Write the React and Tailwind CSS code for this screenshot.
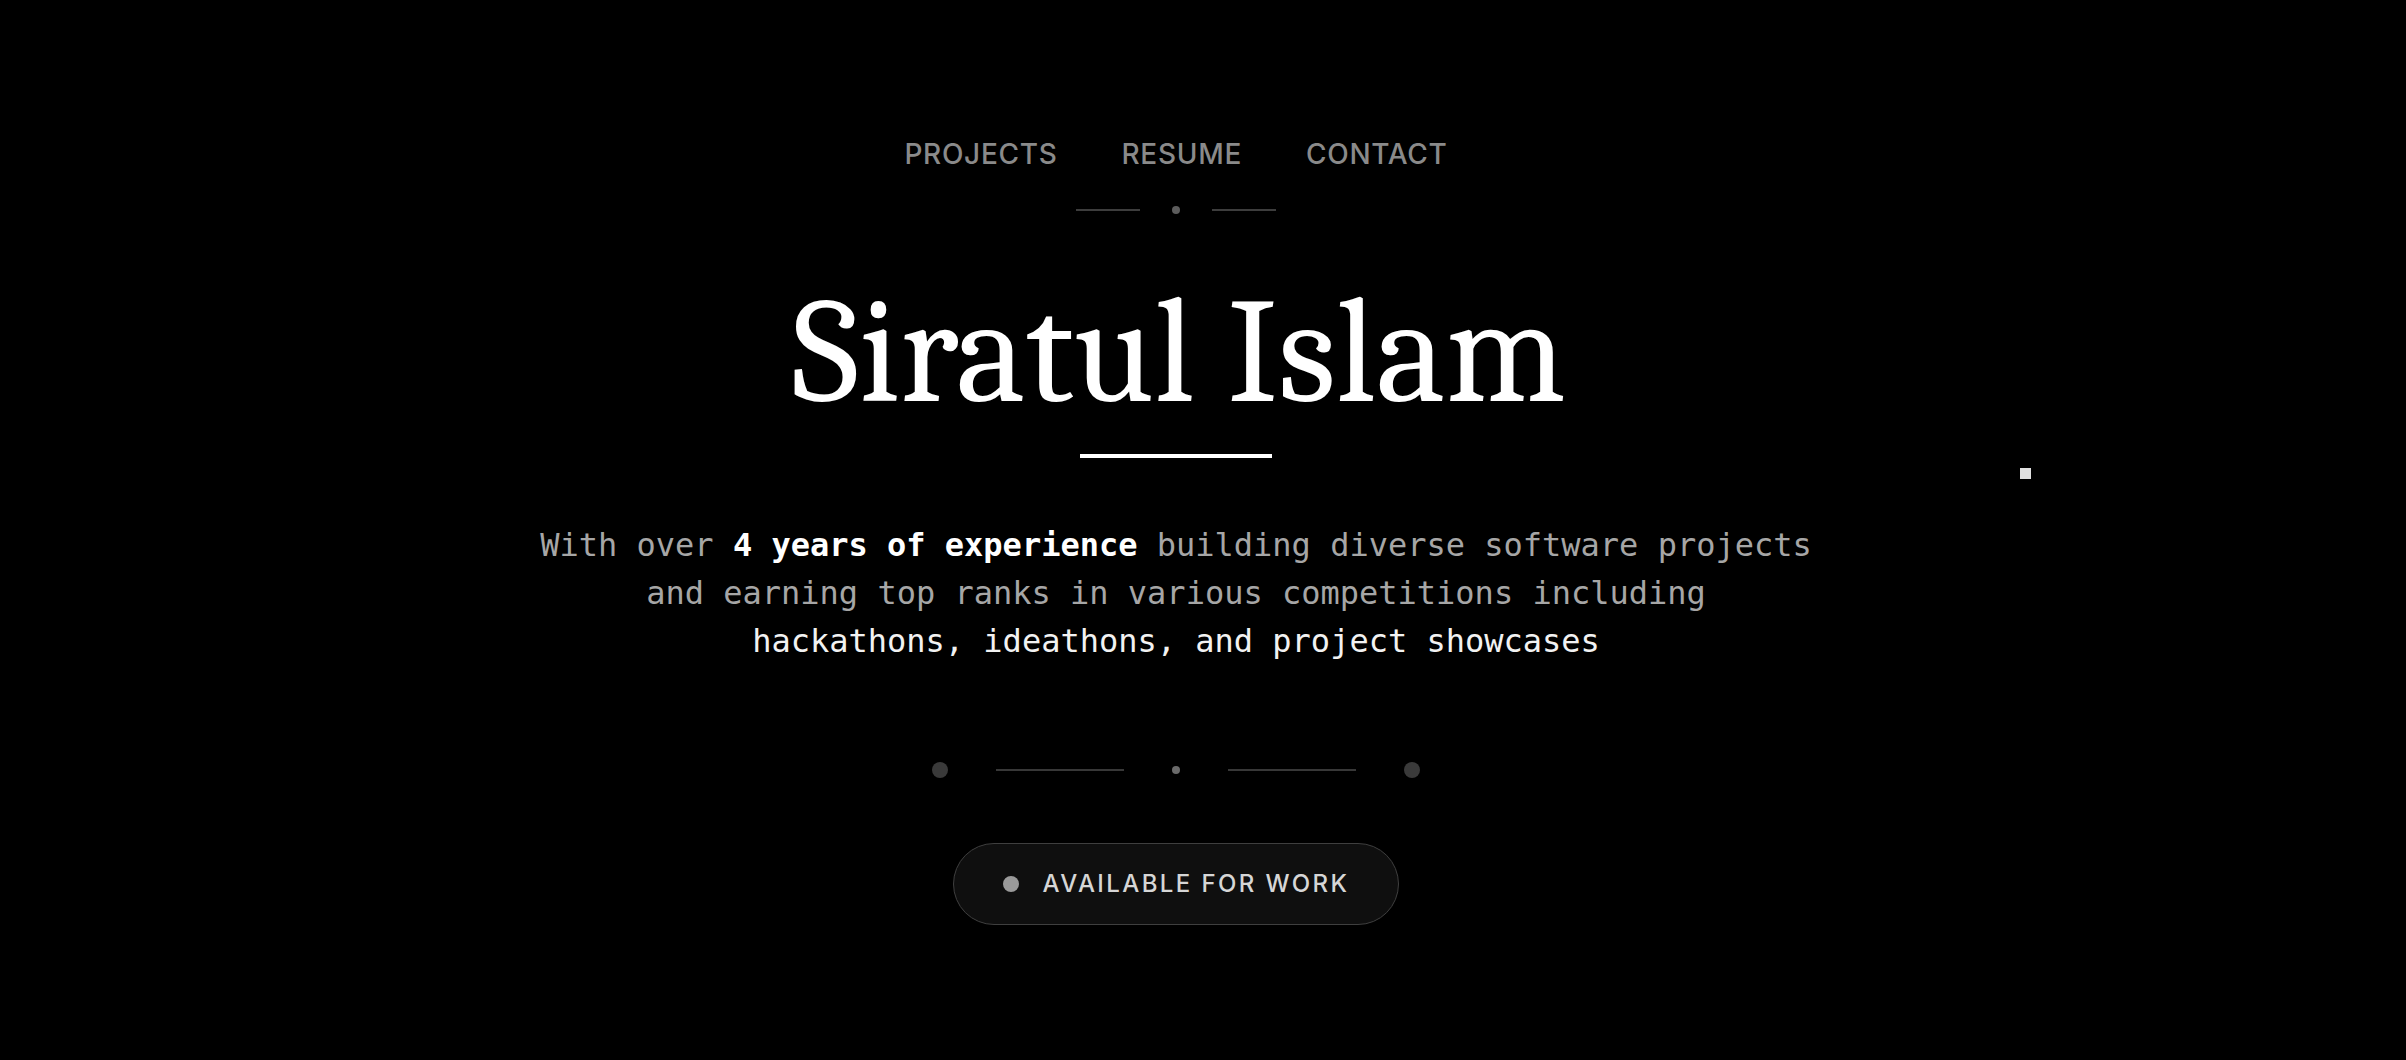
export default function App() {
  return (
    <div className="relative min-h-screen w-full bg-black overflow-hidden">
      <div className="flex flex-col items-center pr-[54px] pb-[120px]">
        <nav className="pt-[133px] flex items-center gap-16 font-['Inter',sans-serif] text-[28px] leading-[42px] font-medium tracking-wide text-[#8a8a8a]">
          <a href="#projects">PROJECTS</a>
          <a href="#resume">RESUME</a>
          <a href="#contact">CONTACT</a>
        </nav>
        <div className="mt-[31px] flex items-center gap-8">
          <div className="h-[2px] w-16 bg-[#3d3d3d]" />
          <div className="h-2 w-2 rounded-full bg-[#5c5c5c]" />
          <div className="h-[2px] w-16 bg-[#3d3d3d]" />
        </div>
        <h1 className="mt-[60px] ml-[6px] h-[158px] font-serif text-[148px] leading-[158px] text-white">
          Siratul Islam
        </h1>
        <div className="mt-[22px] h-1 w-48 bg-white" />
        <p className="mt-[63px] text-center font-['DejaVu_Sans_Mono',monospace] text-[32px] leading-[48px] text-[#a6a6a6]">
          With over <strong className="font-bold text-white">4 years of experience</strong> building diverse software projects
          <br />
          and earning top ranks in various competitions including
          <br />
          <span className="text-[#f2f2f2]">hackathons, ideathons, and project showcases</span>
        </p>
        <div className="mt-[97px] flex items-center gap-12">
          <div className="h-4 w-4 rounded-full bg-[#3a3a3a]" />
          <div className="h-[2px] w-32 bg-[#383838]" />
          <div className="h-2 w-2 rounded-full bg-[#6a6a6a]" />
          <div className="h-[2px] w-32 bg-[#383838]" />
          <div className="h-4 w-4 rounded-full bg-[#3a3a3a]" />
        </div>
        <button className="mt-[65px] flex items-center gap-6 rounded-full border border-[#3f3f3f] bg-[#0f0f0f] px-[49px] py-[24px] font-['Inter',sans-serif] text-[24px] leading-[32px] font-medium tracking-widest text-[#d6d6d6]">
          <span className="h-4 w-4 rounded-full bg-[#9a9a9a]" />
          AVAILABLE FOR WORK
        </button>
      </div>
      <div className="absolute left-[2020px] top-[468px] h-[11px] w-[11px] bg-[#e0e0e0]" />
    </div>
  );
}
